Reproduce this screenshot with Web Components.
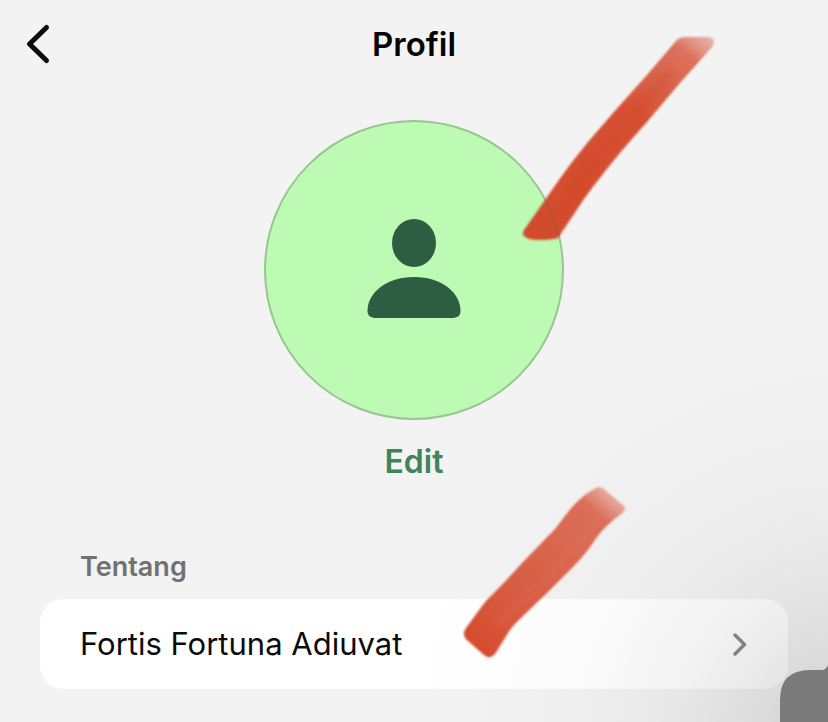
<!DOCTYPE html>
<html lang="id">
<head>
<meta charset="utf-8">
<meta name="viewport" content="width=device-width, initial-scale=1">
<title>Profil</title>
<style>
  html, body { height: 100%; }
  body { margin: 0; background: #f3f3f3; font-family: Inter, "Liberation Sans", sans-serif; overflow: hidden; }
</style>
</head>
<body>
<profile-page>
  <page-header slot="header">Profil</page-header>
  <profile-avatar slot="avatar">Edit</profile-avatar>
  <about-section heading="Tentang">Fortis Fortuna Adiuvat</about-section>
</profile-page>

<script>
const define = (name, markup, init) => {
  const template = document.createElement('template');
  template.innerHTML = markup;
  customElements.define(name, class extends HTMLElement {
    constructor() {
      super();
      this.attachShadow({ mode: 'open' }).append(template.content.cloneNode(true));
    }
    connectedCallback() { if (init) init(this); }
  });
};

define('page-header', `
  <style>
    :host { display: block; }
    header { display: grid; grid-template-columns: 1fr auto 1fr; align-items: center; height: 88px; padding: 0 20px; }
    button { justify-self: start; display: flex; padding: 0; border: 0; background: none; color: #0b0b0b; cursor: pointer; }
    h1 { margin: 0; font-size: 33px; line-height: 40px; font-weight: 600; color: #050505; }
  </style>
  <header>
    <button type="button" aria-label="Kembali">
      <svg width="36" height="44" viewBox="0 0 36 44" fill="none" stroke="currentColor" stroke-width="5" stroke-linecap="round" stroke-linejoin="round" aria-hidden="true"><path d="M26.500 5.500L9.500 22L26.500 38.500"/></svg>
    </button>
    <h1><slot></slot></h1>
  </header>`);

define('profile-avatar', `
  <style>
    :host { display: flex; flex-direction: column; align-items: center; gap: 20px; }
    .photo { box-sizing: border-box; display: grid; place-items: center; width: 300px; height: 300px; border: 2px solid #97c68f; border-radius: 50%; background: #bdfab3; }
    button { padding: 0; border: 0; background: none; font: 600 32px/44px Inter, "Liberation Sans", sans-serif; color: #41845c; cursor: pointer; }
  </style>
  <div class="photo">
    <svg width="96" height="102" viewBox="0 0 96 102" fill="#2d5e42" aria-hidden="true">
      <ellipse cx="48" cy="24" rx="22" ry="24"/>
      <path d="M1.500 92C1.500 74 20 58 48 58S94.500 74 94.500 92C94.500 97 91 99 86 99H10C5 99 1.500 97 1.500 92Z"/>
    </svg>
  </div>
  <button type="button"><slot></slot></button>`);

define('about-section', `
  <style>
    :host { display: block; padding: 0 40px; }
    h2 { margin: 0 0 12px; padding: 0 40px; font-size: 27px; line-height: 40px; font-weight: 600; color: #717171; }
    button { display: flex; align-items: center; justify-content: space-between; box-sizing: border-box; width: 100%; min-height: 90px; padding: 0 40px; border: 0; border-radius: 24px; background: #fff; font: 400 31px/40px Inter, "Liberation Sans", sans-serif; color: #0b0b0b; text-align: left; cursor: pointer; }
    svg { flex: none; }
  </style>
  <section aria-labelledby="heading">
    <h2 id="heading"></h2>
    <button type="button">
      <span><slot></slot></span>
      <svg width="16" height="24" viewBox="0 0 16 24" fill="none" stroke="#8c8c8c" stroke-width="3.500" stroke-linecap="round" stroke-linejoin="round" aria-hidden="true"><path d="M3 3L12.500 12.500L3 22"/></svg>
    </button>
  </section>`, el => {
    el.shadowRoot.querySelector('h2').textContent = el.getAttribute('heading');
  });

define('marker-strokes', `
  <style>
    :host { position: absolute; top: 0; left: 50%; pointer-events: none; }
    svg { display: block; overflow: visible; }
  </style>
  <svg width="340" height="700" viewBox="414 0 340 700" aria-hidden="true">
    <defs>
      <linearGradient id="a" gradientUnits="userSpaceOnUse" x1="702" y1="33" x2="540" y2="240">
        <stop offset="0" stop-color="#d8705a" stop-opacity=".5"/>
        <stop offset=".1" stop-color="#d85c42" stop-opacity=".86"/>
        <stop offset=".4" stop-color="#d5492c" stop-opacity=".96"/>
        <stop offset="1" stop-color="#d24526" stop-opacity=".96"/>
      </linearGradient>
      <linearGradient id="b" gradientUnits="userSpaceOnUse" x1="618" y1="490" x2="480" y2="650">
        <stop offset="0" stop-color="#d9705a" stop-opacity=".4"/>
        <stop offset=".15" stop-color="#d7573c" stop-opacity=".85"/>
        <stop offset=".7" stop-color="#d65438" stop-opacity=".95"/>
        <stop offset="1" stop-color="#d4482b" stop-opacity=".98"/>
      </linearGradient>
      <filter id="soft"><feGaussianBlur stdDeviation="1"/></filter>
      <filter id="grain" x="-20%" y="-20%" width="140%" height="140%"><feGaussianBlur stdDeviation="3"/></filter>
    </defs>
    <g filter="url(#soft)">
      <path fill="url(#a)" d="M676 41Q680 37 685 37H709Q716 38 713 46L680 83L647 122C628 143 600 176 580 205L560 235Q558 239 554 239Q540 241 529 239Q520 236 524 230L545 200C556 184 567 168 580 152C590 139 602 126 613 113L647 75Z"/>
      <path fill="url(#b)" d="M594 489Q599 485 604 489L624 506Q627 510 620 515C611 521 604 528 597 537C590 548 582 558 573 567L547 593L521 618Q511 627 505 638L497 651Q491 661 484 655L468 641Q461 635 466 628L482 606Q486 600 492 595C503 584 513 573 523 562L555 529C564 518 570 508 578 501Q585 494 594 489Z"/>
    </g>
    <path fill="none" stroke="#8c6a35" stroke-opacity=".35" stroke-width="2" d="M546 201A149 149 0 0 1 559 236"/>
    <g fill="none" stroke-linecap="round" filter="url(#grain)">
      <path stroke="#cf3e20" stroke-opacity=".3" stroke-width="8" d="M668 75L622 127Q590 164 555 219"/>
      <path stroke="#e48669" stroke-opacity=".25" stroke-width="4" d="M600 517L552 574L501 621"/>
    </g>
  </svg>`);

define('corner-shade', `
  <style>
    :host { position: absolute; inset: 0; pointer-events: none; background: radial-gradient(circle 440px at calc(100% + 10px) calc(100% + 10px), rgb(0 0 0 / .14), rgb(0 0 0 / .1) 16%, rgb(0 0 0 / .048) 38%, rgb(0 0 0 / .02) 58%, rgb(0 0 0 / .007) 78%, transparent); }
    svg { position: absolute; right: 0; bottom: 0; }
  </style>
  <svg width="48" height="60" viewBox="0 0 48 60" aria-hidden="true"><path fill="#7a7a7a" d="M0 60V38Q0 8 30 8H42Q46 8 48 3V60Z"/></svg>`);

define('profile-page', `
  <style>
    :host { display: block; position: relative; min-height: 100vh; overflow: hidden; }
    main { display: flex; flex-direction: column; padding-top: 32px; gap: 63px; }
  </style>
  <slot name="header"></slot>
  <main><slot name="avatar"></slot><slot></slot></main>
  <corner-shade></corner-shade>
  <marker-strokes></marker-strokes>`);
</script>
</body>
</html>
